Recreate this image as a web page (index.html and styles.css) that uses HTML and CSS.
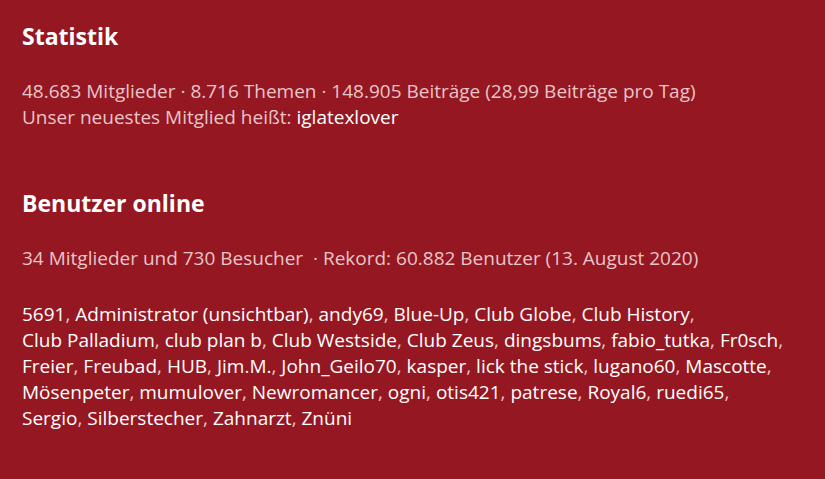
FILE: index.html
```html
<!DOCTYPE html>
<html lang="de">
<head>
<meta charset="utf-8">
<title>Statistik</title>
<link rel="stylesheet" href="styles.css">
</head>
<body>
<main class="panel">
  <section class="block">
    <h2 class="block-title">Statistik</h2>
    <div class="stats">
      <p class="line">48.683 Mitglieder · 8.716 Themen · 148.905 Beiträge (28,99 Beiträge pro Tag)</p>
      <p class="line">Unser neuestes Mitglied heißt: <a class="user" href="#">iglatexlover</a></p>
    </div>
  </section>
  <section class="block block-online">
    <h2 class="block-title">Benutzer online</h2>
    <div class="stats">
      <p class="line">34 Mitglieder und 730 Besucher &nbsp;· Rekord: 60.882 Benutzer (13. August 2020)</p>
    </div>
    <p class="users"><a class="user" href="#">5691</a>, <a class="user" href="#">Administrator (unsichtbar)</a>, <a class="user" href="#">andy69</a>, <a class="user" href="#">Blue-Up</a>, <a class="user" href="#">Club Globe</a>, <a class="user" href="#">Club History</a>, <a class="user" href="#">Club Palladium</a>, <a class="user" href="#">club plan b</a>, <a class="user" href="#">Club Westside</a>, <a class="user" href="#">Club Zeus</a>, <a class="user" href="#">dingsbums</a>, <a class="user" href="#">fabio_tutka</a>, <a class="user" href="#">Fr0sch</a>, <a class="user" href="#">Freier</a>, <a class="user" href="#">Freubad</a>, <a class="user" href="#">HUB</a>, <a class="user" href="#">Jim.M.</a>, <a class="user" href="#">John_Geilo70</a>, <a class="user" href="#">kasper</a>, <a class="user" href="#">lick the stick</a>, <a class="user" href="#">lugano60</a>, <a class="user" href="#">Mascotte</a>, <a class="user" href="#">Mösenpeter</a>, <a class="user" href="#">mumulover</a>, <a class="user" href="#">Newromancer</a>, <a class="user" href="#">ogni</a>, <a class="user" href="#">otis421</a>, <a class="user" href="#">patrese</a>, <a class="user" href="#">Royal6</a>, <a class="user" href="#">ruedi65</a>, <a class="user" href="#">Sergio</a>, <a class="user" href="#">Silberstecher</a>, <a class="user" href="#">Zahnarzt</a>, <a class="user" href="#">Znüni</a></p>
  </section>
</main>
</body>
</html>
```

FILE: styles.css
```css
html, body {
  margin: 0;
  padding: 0;
  background: #951722;
}
body {
  font-family: "Open Sans", "DejaVu Sans", sans-serif;
  font-size: 19px;
  line-height: 26px;
  color: #e8c5c8;
}
.panel {
  padding: 21px 22px 0 22px;
  width: 765px;
}
.block-title {
  margin: 0;
  font-size: 23px;
  line-height: 30px;
  font-weight: 700;
  color: #ffffff;
}
.stats {
  margin-top: 27px;
}
.line {
  margin: 0;
}
.block-online {
  margin-top: 58px;
}
.users {
  margin: 30px 0 0 0;
  color: #e8c5c8;
}
.user {
  color: #ffffff;
  text-decoration: none;
  white-space: nowrap;
}
```
